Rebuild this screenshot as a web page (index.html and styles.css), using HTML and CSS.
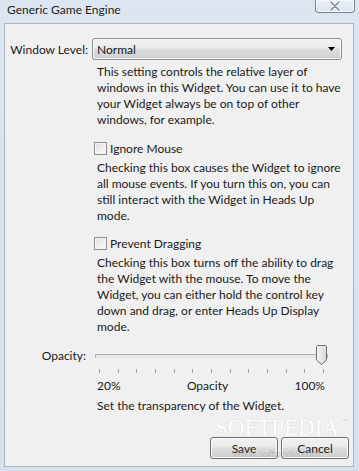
FILE: index.html
```html
<!DOCTYPE html>
<html>
<head>
<meta charset="utf-8">
<link rel="stylesheet" href="styles.css">
</head>
<body>
<div class="window">
  <div class="titlebar">
    <span class="title">Generic Game Engine</span>
    <button class="close" aria-label="Close">
      <svg width="14" height="10" viewBox="0 0 14 10">
        <path d="M3 1 L11 9 M11 1 L3 9" stroke="#ffffff" stroke-width="3.2" stroke-linecap="round"/>
        <path d="M3 1 L11 9 M11 1 L3 9" stroke="#7d8791" stroke-width="1.6" stroke-linecap="round"/>
      </svg>
    </button>
  </div>
  <div class="client">
    <div class="row row-select">
      <label class="lbl">Window Level:</label>
      <div class="select">
        <span>Normal</span>
        <svg class="arrow" width="7" height="4" viewBox="0 0 7 4"><path d="M0 0 H7 L3.5 4 Z" fill="#000"/></svg>
      </div>
    </div>
    <p class="desc d1">This setting controls the relative layer of<br>windows in this Widget. You can use it to have<br>your Widget always be on top of other<br>windows, for example.</p>

    <div class="check c1"><span class="box"></span><span>Ignore Mouse</span></div>
    <p class="desc d2">Checking this box causes the Widget to ignore<br>all mouse events. If you turn this on, you can<br>still interact with the Widget in Heads Up<br>mode.</p>

    <div class="check c2"><span class="box"></span><span>Prevent Dragging</span></div>
    <p class="desc d3">Checking this box turns off the ability to drag<br>the Widget with the mouse. To move the<br>Widget, you can either hold the control key<br>down and drag, or enter Heads Up Display<br>mode.</p>

    <div class="row row-slider">
      <label class="lbl">Opacity:</label>
      <div class="slider">
        <div class="track"></div>
        <svg class="thumb" width="11" height="20" viewBox="0 0 11 20">
          <defs>
            <linearGradient id="tg" x1="0" y1="0" x2="1" y2="0">
              <stop offset="0" stop-color="#f4f4f4"/>
              <stop offset="1" stop-color="#d8d8d8"/>
            </linearGradient>
          </defs>
          <path d="M1.5 0.5 H9.5 Q10.5 0.5 10.5 1.5 V15 L5.5 19.5 L0.5 15 V1.5 Q0.5 0.5 1.5 0.5 Z" fill="url(#tg)" stroke="#707070"/>
        </svg>
      </div>
    </div>
    <div class="ticks">
      <i></i><i></i><i></i><i></i><i></i><i></i><i></i><i></i><i></i><i></i><i></i><i></i><i></i>
    </div>
    <div class="scale"><span>20%</span><span>Opacity</span><span>100%</span></div>
    <p class="desc d4">Set the transparency of the Widget.</p>

    <div class="buttons">
      <span class="wm">SOFTPEDIA</span>
      <span class="tm">™</span>
      <button class="btn">Save</button>
      <button class="btn">Cancel</button>
      <span class="wm-small">www.softpedia.com</span>
    </div>
  </div>
</div>
</body>
</html>
```

FILE: styles.css
```css
html, body {
  margin: 0;
  padding: 0;
  background: #dfe7f0;
}
body {
  font-family: Lato, "Noto Sans", sans-serif;
  font-size: 12px;
  color: #1a1a1a;
}
.window {
  width: 359px;
  height: 471px;
  background: linear-gradient(180deg, #dde6f0 0%, #d7e1ec 100%);
  display: flex;
  flex-direction: column;
  box-sizing: border-box;
}
.titlebar {
  height: 23px;
  display: flex;
  align-items: flex-start;
  justify-content: space-between;
  flex: none;
}
.title {
  margin: 3px 0 0 7px;
  font-size: 12px;
  color: #1e1e1e;
  line-height: 14px;
}
.close {
  margin: 0 4px 0 0;
  width: 40px;
  height: 13px;
  padding: 0;
  border: 1px solid #7a8594;
  border-top: none;
  border-radius: 0 0 4px 4px;
  background: linear-gradient(180deg, #e8eef5 0%, #dde5ee 100%);
  display: flex;
  align-items: center;
  justify-content: center;
  box-shadow: inset 0 0 0 1px #f4f7fa;
}
.client {
  position: relative;
  margin: 0 5px 4px 4px;
  flex: 1;
  border: 1px solid #a9b4c0;
  background: #f0f0f0;
  box-sizing: border-box;
  display: flex;
  flex-direction: column;
  padding: 14px 11px 0 0;
}
.row {
  display: flex;
  align-items: center;
}
.lbl {
  width: 83px;
  text-align: right;
  padding-right: 4px;
  flex: none;
  white-space: nowrap;
}
.select {
  flex: 1;
  height: 22px;
  box-sizing: border-box;
  border: 1px solid #8e8f8f;
  border-radius: 3px;
  background: linear-gradient(180deg, #f3f3f3 0%, #ebebeb 45%, #dddddd 50%, #cfcfcf 100%);
  display: flex;
  align-items: center;
  justify-content: space-between;
  padding: 0 6px 0 4px;
  box-shadow: inset 0 0 0 1px #f7f7f7;
}
.desc {
  margin: 0;
  padding-left: 92px;
  line-height: 16px;
  white-space: nowrap;
}
.d1 { margin-top: 4px; }
.check {
  display: flex;
  align-items: center;
  height: 16px;
  padding-left: 89px;
  gap: 3px;
}
.c1 { margin-top: 12px; }
.c2 { margin-top: 11px; }
.d2, .d3 { margin-top: 4px; }
.box {
  width: 11px;
  height: 11px;
  border: 1px solid #8f8f8f;
  background: linear-gradient(135deg, #dcdcdc 0%, #f5f5f5 70%, #ffffff 100%);
  box-shadow: inset 0 0 0 1px #f4f4f4;
  flex: none;
}
.row-slider {
  margin-top: 10px;
  height: 20px;
}
.row-slider .lbl {
  width: 81px;
  padding-right: 6px;
}
.slider {
  position: relative;
  flex: none;
  width: 233px;
  height: 20px;
  margin-left: 3px;
}
.track {
  position: absolute;
  left: 0;
  right: 0;
  top: 9px;
  height: 2px;
  border: 1px solid #b0b0b0;
  border-bottom-color: #e6e6e6;
  background: #e7eaea;
}
.thumb {
  position: absolute;
  right: 1px;
  top: 0;
}
.ticks {
  margin: 4px 0 0 94px;
  width: 225px;
  height: 4px;
  display: flex;
  justify-content: space-between;
}
.ticks i {
  width: 1px;
  height: 4px;
  background: #a3a3a3;
}
.scale {
  margin: 5px 0 0 92px;
  width: 228px;
  display: flex;
  justify-content: space-between;
  line-height: 16px;
}
.d4 { margin-top: 4px; }
.buttons {
  margin-top: auto;
  margin-bottom: 7px;
  display: flex;
  justify-content: flex-end;
  gap: 3px;
  margin-right: -7px;
  position: relative;
}
.btn {
  width: 68px;
  height: 22px;
  padding: 0;
  font-family: Lato, "Noto Sans", sans-serif;
  font-size: 12px;
  color: #1a1a1a;
  border: 1px solid #707070;
  border-radius: 3px;
  background: linear-gradient(180deg, #f2f2f2 0%, #ebebeb 45%, #dddddd 50%, #cfcfcf 100%);
  box-shadow: inset 0 0 0 1px #f8f8f8;
}
.wm {
  position: absolute;
  right: 10px;
  top: -22px;
  font-family: "Liberation Serif", serif;
  font-size: 23px;
  line-height: 26px;
  color: #ffffff;
  text-shadow: 0 0 1px #d0d0d0, 0 0 1px #dcdcdc;
  pointer-events: none;
}
.tm {
  position: absolute;
  right: 2px;
  top: -20px;
  font-size: 6px;
  line-height: 8px;
  color: #c4c4c4;
  pointer-events: none;
}
.wm-small {
  position: absolute;
  right: 29px;
  top: 10px;
  font-size: 10px;
  line-height: 12px;
  color: #a8a8a8;
  opacity: 0.55;
  pointer-events: none;
}
```
